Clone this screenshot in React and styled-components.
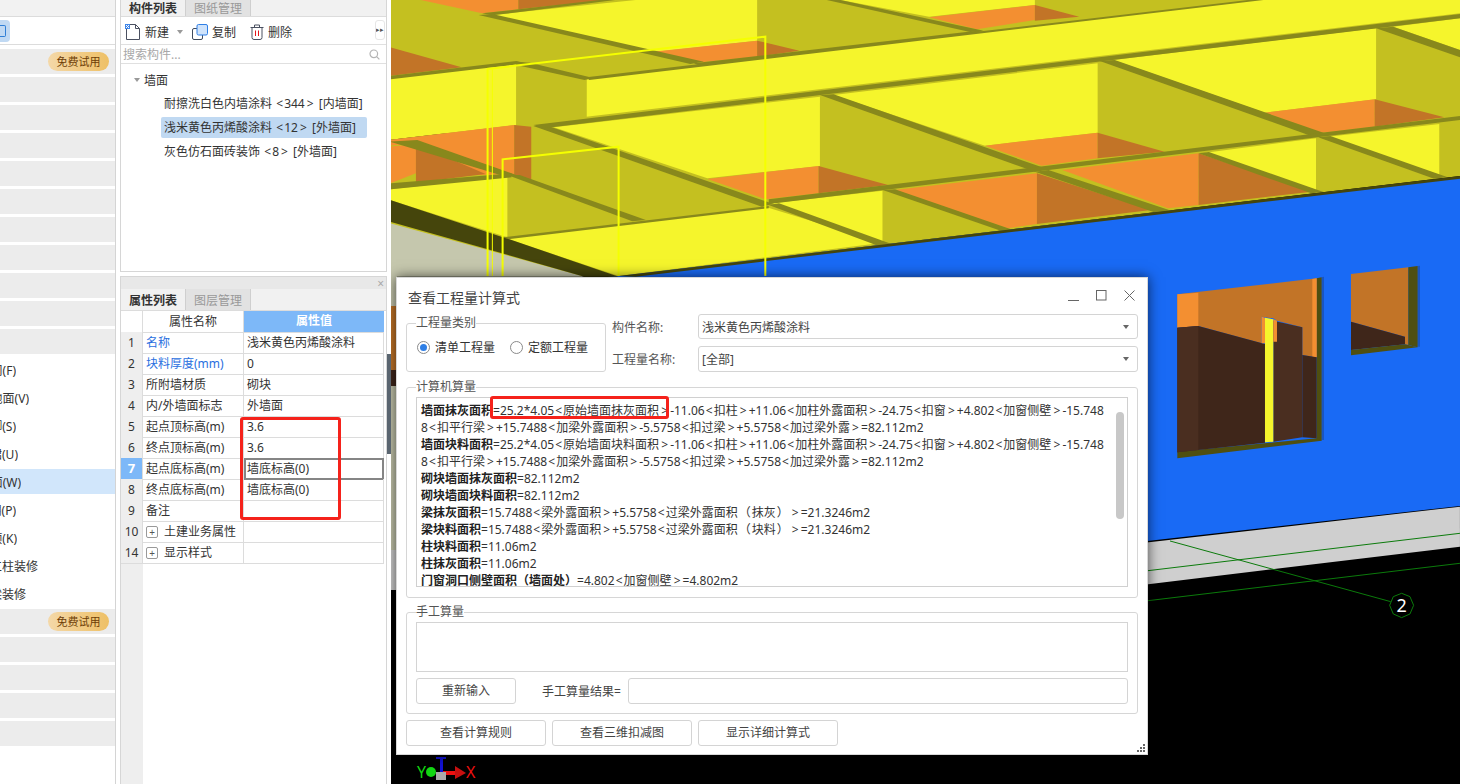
import React from 'react'
import styled, { createGlobalStyle } from 'styled-components'

const FONT = '"Noto Sans", "Noto Sans CJK SC", sans-serif'

const GlobalStyle = createGlobalStyle`
  html, body { margin: 0; padding: 0; height: 100%; overflow: hidden; background: #fff; }
  body { font-family: ${FONT}; font-size: 12px; color: #333; }
  * { box-sizing: border-box; }
`

const Page = styled.div`
  display: flex;
  width: 1460px;
  height: 784px;
  overflow: hidden;
`

/* ---------- left sidebar ---------- */
const Sidebar = styled.div`
  width: 116px;
  flex: none;
  border-right: 1px solid #d4d4d4;
  display: flex;
  flex-direction: column;
`
const SideHead = styled.div`
  height: 17px;
  background: #f2f2f2;
  border-bottom: 1px solid #dcdcdc;
`
const SideSearch = styled.div`
  height: 28px;
  padding-top: 3px;
  border-bottom: 1px solid #dcdcdc;
`
const SideChip = styled.div`
  width: 10px;
  height: 22px;
  background: #c0d9f3;
  border-radius: 0 4px 4px 0;
  display: flex;
  align-items: center;
`
const SideChipIcon = styled.div`
  width: 6px;
  height: 12px;
  border: 1px solid #2f7fd6;
  border-left: none;
  border-radius: 0 2px 2px 0;
`
const SideList = styled.div`
  display: flex;
  flex-direction: column;
  gap: 3px;
  padding-top: 4px;
`
const LockedRow = styled.div`
  height: 25px;
  background: #ececec;
  display: flex;
  align-items: center;
  justify-content: flex-end;
  padding-right: 6px;
`
const Badge = styled.span`
  width: 61px;
  height: 19px;
  border-radius: 10px;
  background: linear-gradient(90deg, #f4d8a8, #eec066);
  color: #6d3d06;
  font-size: 11px;
  line-height: 19px;
  text-align: center;
`
const NavRow = styled.div`
  height: 25px;
  background: ${p => (p.$active ? '#d1e6fb' : 'transparent')};
  display: flex;
  align-items: center;
`
const NavLabel = styled.div`
  width: ${p => p.$end}px;
  overflow: hidden;
  display: flex;
  justify-content: flex-end;
  white-space: nowrap;
  flex: none;
`

/* ---------- middle panels ---------- */
const Middle = styled.div`
  width: 271px;
  flex: none;
  margin-left: 4px;
  padding-right: 4px;
  display: flex;
  flex-direction: column;
  position: relative;
`
const Handle = styled.div`
  position: absolute;
  right: 0;
  top: 354px;
  width: 4px;
  height: 100px;
  background: #5a6570;
`
const Panel = styled.div`
  border: 1px solid #d6d6d6;
  border-top: ${p => (p.$open ? 'none' : '1px solid #d6d6d6')};
  display: flex;
  flex-direction: column;
`
const ListPanel = styled(Panel)`
  height: 272px;
`
const PropPanel = styled(Panel)`
  margin-top: 4px;
  flex: 1;
  border-bottom: none;
`
const TabBar = styled.div`
  height: ${p => p.$h}px;
  flex: none;
  display: flex;
  align-items: stretch;
  background: #f1f1f1;
  border-bottom: 1px solid #dcdcdc;
`
const Tab = styled.div`
  width: 65px;
  display: flex;
  align-items: center;
  justify-content: center;
  font-size: 12px;
  font-weight: ${p => (p.$active ? 700 : 400)};
  color: ${p => (p.$active ? '#333' : '#999')};
  background: ${p => (p.$active ? '#f1f1f1' : '#e2e2e2')};
  border-right: 1px solid #cfcfcf;
`
const Toolbar = styled.div`
  height: 28px;
  flex: none;
  display: flex;
  align-items: center;
  padding: 2px 0 0 4px;
  border-bottom: 1px solid #e0e0e0;
  position: relative;
`
const ToolButton = styled.div`
  display: flex;
  align-items: center;
  gap: 4px;
  margin-left: ${p => p.$left || 0}px;
  margin-right: ${p => p.$gap}px;
`
const Caret = styled.span`
  width: 0;
  height: 0;
  border-left: 3px solid transparent;
  border-right: 3px solid transparent;
  border-top: 4px solid ${p => p.$c || '#999'};
`
const ToolMore = styled.div`
  position: absolute;
  right: 1px;
  top: 3px;
  width: 10px;
  height: 20px;
  background: #fff;
  border: 1px solid #e6e6e6;
  border-radius: 3px;
  font-size: 7px;
  line-height: 18px;
  text-align: center;
  color: #555;
  overflow: hidden;
`
const SearchBox = styled.div`
  height: 19px;
  flex: none;
  display: flex;
  align-items: center;
  justify-content: space-between;
  padding: 0 6px 0 2px;
  color: #a8a8a8;
  border-bottom: 1px solid #e0e0e0;
`
const Tree = styled.div`
  padding-top: 3px;
  display: flex;
  flex-direction: column;
`
const TreeRoot = styled.div`
  height: 26px;
  display: flex;
  align-items: center;
  gap: 4px;
  padding-left: 13px;
`
const TreeItem = styled.div`
  height: 21px;
  margin: 0 0 3px 40px;
  width: 206px;
  padding-left: 3px;
  line-height: 21px;
  border-radius: 2px;
  white-space: nowrap;
  background: ${p => (p.$active ? '#c0d9f2' : 'transparent')};
`
const Angle = styled.span`
  display: inline-block;
  width: ${p => p.$w}px;
  text-align: center;
`
const PanelStrip = styled.div`
  height: 12px;
  flex: none;
  background: #e8e8e8;
  display: flex;
  align-items: center;
  justify-content: flex-end;
  padding-right: 2px;
  color: #aaa;
  font-size: 12px;
`
const PropBody = styled.div`
  flex: 1;
  position: relative;
  background: linear-gradient(90deg, #eee 22px, #fff 22px);
`
const PropRow = styled.div`
  display: grid;
  grid-template-columns: 22px 101px 140px;
  height: 21px;
  background: #fff;
  width: 263px;
`
const IndexCell = styled.div`
  background: ${p => (p.$active ? '#7db8f8' : p.$blank ? '#fff' : '#eee')};
  color: ${p => (p.$active ? '#fff' : '#333')};
  font-weight: ${p => (p.$active ? 700 : 400)};
  font-size: ${p => (p.$active ? 13 : 12)}px;
  text-align: center;
  line-height: 21px;
  border-right: 1px solid #dcdcdc;
  border-bottom: 1px solid #dcdcdc;
`
const NameCell = styled.div`
  padding-left: 3px;
  line-height: 21px;
  white-space: nowrap;
  color: ${p => (p.$blue ? '#2a6fe0' : '#333')};
  border-right: 1px solid #dcdcdc;
  border-bottom: 1px solid #dcdcdc;
  display: flex;
  align-items: center;
  gap: 6px;
`
const ValueCell = styled.div`
  padding-left: 3px;
  line-height: 21px;
  white-space: nowrap;
  border-right: 1px solid #dcdcdc;
  border-bottom: 1px solid #dcdcdc;
  outline: ${p => (p.$selected ? '2px solid #858585' : 'none')};
  outline-offset: -2px;
`
const HeadName = styled(NameCell)`
  justify-content: center;
  padding-left: 0;
  font-size: 12px;
`
const HeadValue = styled.div`
  background: #7db8f8;
  color: #fff;
  font-weight: 700;
  text-align: center;
  line-height: 20px;
  border-bottom: 1px solid #dcdcdc;
`
const Plus = styled.span`
  width: 12px;
  height: 12px;
  border: 1px solid #999;
  border-radius: 2px;
  font-size: 10px;
  line-height: 10px;
  text-align: center;
  color: #555;
  flex: none;
`
const RedBox = styled.div`
  position: absolute;
  left: ${p => p.$x}px;
  top: ${p => p.$y}px;
  width: ${p => p.$w}px;
  height: ${p => p.$h}px;
  border: 3px solid #f5221b;
  border-radius: 3px;
  pointer-events: none;
`

/* ---------- 3D viewport ---------- */
const Viewport = styled.div`
  flex: 1;
  position: relative;
  background: #000;
  overflow: hidden;
`
const Scene = styled.svg`
  display: block;
  width: 1069px;
  height: 784px;
`

/* ---------- dialog ---------- */
const Dialog = styled.div`
  position: absolute;
  left: 5px;
  top: 277px;
  width: 752px;
  height: 478px;
  background: #fff;
  border: 1px solid #d8d8d8;
  box-shadow: 0 0 12px rgba(0, 0, 0, 0.65);
  padding: 0 9px;
  display: flex;
  flex-direction: column;
`
const TitleBar = styled.div`
  height: 36px;
  flex: none;
  display: flex;
  align-items: center;
  justify-content: space-between;
  padding: 2px 3px 0 2px;
`
const Title = styled.div`
  font-size: 14px;
  color: #444;
`
const WinButtons = styled.div`
  display: flex;
  align-items: center;
  gap: 17px;
  margin-top: -3px;
`
const TopRow = styled.div`
  display: flex;
  height: 58px;
  flex: none;
`
const Group = styled.fieldset`
  margin: ${p => p.$top || 0}px 0 0 0;
  padding: 0 ${p => p.$px ?? 9}px;
  width: ${p => p.$w || '732px'};
  height: ${p => p.$h}px;
  border: 1px solid #d6d6d6;
  border-radius: 3px;
  flex: none;
  min-width: 0;
  position: relative;
`
const Legend = styled.legend`
  margin-left: 0;
  padding: 0;
  height: 16px;
  line-height: 16px;
  font-size: 12px;
  color: #555;
`
const RadioRow = styled.div`
  display: flex;
  align-items: center;
  height: 32px;
  padding-left: 1px;
`
const RadioDot = styled.span`
  width: 13px;
  height: 13px;
  border-radius: 50%;
  border: 1px solid #8a8a8a;
  flex: none;
  margin-right: 5px;
  display: flex;
  align-items: center;
  justify-content: center;
  &::after {
    content: '';
    width: 7px;
    height: 7px;
    border-radius: 50%;
    background: ${p => (p.$on ? '#2f7fe6' : 'transparent')};
  }
`
const RadioText = styled.span`
  margin-right: 15px;
  white-space: nowrap;
  color: #333;
`
const Fields = styled.div`
  margin-left: 6px;
  width: 526px;
  display: flex;
  flex-direction: column;
  gap: 7px;
`
const FieldRow = styled.div`
  display: flex;
  align-items: center;
  height: ${p => p.$h}px;
`
const FieldLabel = styled.div`
  width: 86px;
  color: #555;
  flex: none;
`
const Select = styled.div`
  flex: 1;
  height: 100%;
  border: 1px solid #d4d4d4;
  border-radius: 3px;
  display: flex;
  align-items: center;
  justify-content: space-between;
  padding: 0 8px 0 3px;
  color: #444;
`
const CalcBox = styled.div`
  height: 190px;
  margin-top: 2px;
  border: 1px solid #d0d0d0;
  position: relative;
  overflow: hidden;
  padding: 4px 0 0 4px;
`
const CalcLine = styled.div`
  height: 17px;
  line-height: 17px;
  white-space: nowrap;
  font-size: 12px;
  color: #333;
  b { font-weight: 700; color: #222; }
`
const ScrollThumb = styled.div`
  position: absolute;
  right: 3px;
  top: 14px;
  width: 8px;
  height: 107px;
  background: #c8c8c8;
  border-radius: 4px;
`
const ManualArea = styled.div`
  height: 50px;
  margin-top: 2px;
  border: 1px solid #d4d4d4;
`
const ManualRow = styled.div`
  display: flex;
  align-items: center;
  margin-top: 6px;
`
const Button = styled.div`
  width: ${p => p.$w}px;
  height: 26px;
  flex: none;
  border: 1px solid #d4d4d4;
  border-radius: 3px;
  background: #fff;
  color: #444;
  line-height: 24px;
  text-align: center;
`
const ManualLabel = styled.div`
  margin-left: 26px;
  width: 86px;
  flex: none;
  color: #444;
  white-space: nowrap;
`
const ManualInput = styled.div`
  flex: 1;
  height: 26px;
  border: 1px solid #d4d4d4;
  border-radius: 3px;
`
const ButtonRow = styled.div`
  display: flex;
  gap: 6px;
  margin-top: 6px;
`
const Grip = styled.svg`
  position: absolute;
  right: 2px;
  bottom: 2px;
  width: 9px;
  height: 9px;
`

/* scene data: [fill, points] with points as read off the picture */
const Y = '#f5f52c'
const O = '#c4c020'
const A = '#f38f31'
const D = '#c27427'
const B = '#88881c'

const beams = [
  '130,45 150,42 460,185 440,192', '210,378 232,378 562,612 545,620', '630,285 650,283 960,505 945,515',
  '1040,183 1062,180 1370,400 1350,408', '1445,85 1470,80 1568,150 1568,172', '945,515 965,510 1145,632 1120,637',
  '722,570 740,568 910,688 895,692', '555,615 570,610 735,732 715,737', '1185,460 1200,456 1368,576 1350,580',
  '1360,412 1378,408 1550,532 1530,536', '0,425 40,420 185,525 170,530', '172,525 190,525 375,660 355,664',
  '135,40 320,-3 330,0 150,46', '445,190 860,92 870,95 455,198', '0,228 185,183 200,190 0,238',
  '185,185 205,188 298,234 285,240 185,195',
  '288,232 1270,-3 1280,0 292,240', '210,375 1568,42 1568,55 225,385',
  '0,550 178,520 178,532 0,568', '555,598 1568,348 1568,360 555,612', '165,712 555,618 555,625 172,718',
]

const faces = [
  [O, '0,0 1568,0 1568,400 0,400'],
  [D, '0,142 105,202 0,228'],
  [A, '45,0 188,0 188,28 135,40'],
  [D, '188,0 320,0 188,28'],
  [Y, '150,45 360,0 538,0 538,122 390,155'],
  [A, '385,155 538,122 538,170 455,187'],
  [D, '538,122 600,152 538,170'],
  [Y, '660,0 945,0 945,15 790,50'],
  [A, '790,52 945,15 945,60 860,88'],
  [D, '945,15 1010,50 945,62'],
  [B, '640,0 660,0 870,92 850,96'],
  [Y, '288,238 1270,0 1568,0 1568,45 288,358'],
  [Y, '0,235 185,190 185,375 0,420'],
  [O, '185,190 288,238 288,358 185,375'],
  [O, '0,420 1568,40 1568,528 335,828 0,828'],
  [A, '0,420 182,375 182,522 130,525 35,430 0,437'],
  [D, '182,375 207,380 207,540 182,530'],
  [Y, '240,382 630,290 630,498 465,535'],
  [Y, '650,285 1037,190 1037,398 872,437'],
  [Y, '1060,180 1445,85 1445,298 1282,338'],
  [Y, '1470,80 1568,55 1568,150'],
  [A, '465,537 628,498 628,580 550,598'],
  [D, '628,498 730,555 628,580'],
  [A, '872,437 1037,398 1037,475 955,497'],
  [D, '1037,398 1135,455 1037,475'],
  [A, '1282,338 1443,298 1443,380 1365,398'],
  [D, '1443,298 1545,352 1443,380'],
  [A, '0,440 38,432 38,520 0,550'],
  [D, '38,432 140,522 38,548'],
  [O, '0,620 0,560 172,528 370,660 172,712'],
  [Y, '0,568 172,528 172,712 0,600'],
  [Y, '170,715 552,622 722,728 335,828'],
  [Y, '560,610 722,572 722,728'],
  [O, '722,572 895,690 722,728'],
  [A, '740,570 948,520 948,672 905,685'],
  [D, '948,520 1115,630 948,672'],
  [A, '985,510 1185,460 1185,615 1140,625'],
  [D, '1185,460 1350,575 1185,615'],
  [Y, '1195,458 1357,415 1357,570'],
  [O, '1357,415 1540,530 1357,572'],
  [Y, '1375,410 1538,372 1538,525'],
  [O, '1538,372 1568,395 1568,522 1538,530'],
]

const windowParts = [
  ['#1a55c0', '545,82 552,80 552,570 545,570'],
  ['#4f4f10', '530,85 545,82 545,572 530,572'],
  ['#4f4f10', '112,605 530,565 545,572 112,625'],
  [D, '112,133 530,85 530,322 487,315 487,232 411,212 400,205 365,200 365,280 175,228 112,232'],
  [A, '112,133 175,128 175,228 112,233'],
  [A, '517,87 530,85 530,322 517,320'],
  ['#3f261a', '112,233 175,228 375,282 375,578 112,607'],
  ['#4a2e20', '112,233 175,228 175,600 112,607'],
  ['#4a2e20', '400,212 487,232 487,562 400,575'],
  ['#3f261a', '487,315 530,322 530,565 487,562'],
  [Y, '375,203 400,208 400,575 375,577'],
  [A, '365,200 375,203 375,280 365,280'],
  [A, '400,208 411,212 411,275 400,275'],
  ['#1a55c0', '833,48 840,47 840,290 833,290'],
  [D, '633,72 805,52 805,285 795,283 795,260 633,215'],
  ['#3f261a', '633,215 795,260 795,283 633,300'],
  ['#4f4f10', '805,52 833,48 833,292 805,285'],
  ['#4f4f10', '633,300 795,283 833,292 633,316'],
]

const CanvasScene = () => (
  <Scene viewBox="391 0 1069 784">
    <rect x="391" y="0" width="1069" height="784" fill="#000" />
    <g transform="translate(390 0) scale(0.6824 0.3333)">
      <polygon fill="#196af5" points="320,830 1568,530 1568,1518 320,1805" />
      {faces.map(([fill, pts], i) => <polygon key={i} fill={fill} points={pts} />)}
      {beams.map((pts, i) => <polygon key={i} fill={B} points={pts} />)}
      <polygon fill="#c5c7ad" points="0,670 285,830 0,830" />
      <polygon fill="#45450c" points="0,600 172,716 335,830 285,830 0,665" />
      <polygon fill="#45450c" points="335,828 1568,528 1568,536 360,830" />
      <polyline fill="none" stroke="#f5ff00" strokeWidth="2" vectorEffect="non-scaling-stroke" points="143,828 143,207 550,110 550,828" />
      <polyline fill="none" stroke="#f5ff00" strokeWidth="2" vectorEffect="non-scaling-stroke" points="165,828 165,478 335,440 335,828" />
      <line x1="150" y1="828" x2="150" y2="207" stroke="#f5ff00" strokeWidth="1" vectorEffect="non-scaling-stroke" />
    </g>
    {/* sliver of the model left of the dialog */}
    <rect x="391" y="276" width="6" height="30" fill="#c5c7ad" />
    <rect x="391" y="306" width="6" height="64" fill={D} />
    <rect x="391" y="370" width="6" height="16" fill="#3f261a" />
    <rect x="391" y="386" width="6" height="164" fill="#c5c7ad" />
    <rect x="391" y="550" width="6" height="40" fill="#cfcfcf" />
    <g transform="translate(1140 250) scale(0.3333)">
      {windowParts.map(([fill, pts], i) => <polygon key={i} fill={fill} points={pts} />)}
      <polygon fill="#cfcfcf" points="0,880 960,770 960,890 0,1006" />
      <g fill="none" stroke="#0b7a0b" strokeWidth="3">
        <line x1="0" y1="965" x2="960" y2="850" />
        <line x1="0" y1="1055" x2="960" y2="940" />
        <line x1="90" y1="873" x2="752" y2="1055" />
        <polygon points="785,1030 810,1040 821,1066 810,1092 785,1103 760,1092 749,1066 760,1040" fill="#000" />
      </g>
      <text x="785" y="1086" fontSize="54" fill="#fff" textAnchor="middle" fontFamily="Noto Sans, sans-serif">2</text>
    </g>
    {/* axis gizmo */}
    <text x="417" y="778" fontSize="16" fill="#12d812" fontFamily="Noto Sans, sans-serif">Y</text>
    <circle cx="431" cy="772" r="5" fill="#12d812" />
    <rect x="440" y="757" width="3" height="17" fill="#1212d8" />
    <rect x="436" y="757" width="10" height="2" fill="#1212d8" />
    <rect x="443" y="771" width="14" height="4" fill="#ee1111" />
    <polygon points="455,766 466,773 455,779" fill="#c81010" />
    <rect x="436" y="772" width="10" height="8" fill="#aaa" />
    <text x="466" y="778" fontSize="16" fill="#ee1111" fontFamily="Noto Sans, sans-serif">X</text>
  </Scene>
)

/* ---------- little icons ---------- */
const NewIcon = () => (
  <svg width="16" height="16" viewBox="0 0 16 16">
    <path d="M1.5 5V15.5H14.5V4.5L10.5 .5H5" fill="#fff" stroke="#4a5060" />
    <path d="M10.5 .5V4.5H14.5" fill="none" stroke="#4a5060" />
    <rect x="0" y="0" width="5" height="5" fill="#3f86e8" />
    <path d="M1 1h1v1H1zM3 1h1v1H3zM2 2h1v1H2zM1 3h1v1H1zM3 3h1v1H3z" fill="#fff" />
  </svg>
)
const CopyIcon = () => (
  <svg width="16" height="16" viewBox="0 0 16 16">
    <rect x=".5" y="4.5" width="10" height="11" rx="1.5" fill="#fff" stroke="#3f4a5c" />
    <rect x="5" y=".5" width="10.5" height="10.5" rx="1.5" fill="#cfe3fb" stroke="#2f7fe6" />
  </svg>
)
const TrashIcon = () => (
  <svg width="14" height="16" viewBox="0 0 14 16">
    <path d="M.5 3.5H13.5M4.5 3.5V1H9.5V3.5" fill="none" stroke="#4a5060" />
    <path d="M2 3.5V13.5Q2 15.5 4 15.5H10Q12 15.5 12 13.5V3.5" fill="none" stroke="#4a5060" />
    <path d="M5.5 6.5V12M8.5 6.5V12" stroke="#e4141c" />
  </svg>
)
const SearchIcon = () => (
  <svg width="11" height="11" viewBox="0 0 11 11">
    <circle cx="4.8" cy="4.8" r="3.8" fill="none" stroke="#b4b4b4" strokeWidth="1.2" />
    <path d="M7.6 7.6L10.4 10.4" stroke="#b4b4b4" strokeWidth="1.2" />
  </svg>
)
const MinIcon = () => (
  <svg width="11" height="11" viewBox="0 0 11 11"><path d="M0 10.5H11" stroke="#666" /></svg>
)
const MaxIcon = () => (
  <svg width="11" height="11" viewBox="0 0 11 11"><rect x=".5" y=".5" width="9.5" height="9.5" fill="none" stroke="#666" /></svg>
)
const CloseIcon = () => (
  <svg width="11" height="11" viewBox="0 0 11 11"><path d="M.5 .5L10.5 10.5M10.5 .5L.5 10.5" stroke="#666" /></svg>
)

// the app draws < and > and the full-width brackets wider than the font does
const spaced = text =>
  text.split(/([<>（）])/).map((part, i) =>
    part === '<' ? <Angle key={i} $w={9}>&lt;</Angle>
    : part === '>' ? <Angle key={i} $w={11}>&gt;</Angle>
    : part === '（' || part === '）' ? <Angle key={i} $w={14}>{part}</Angle>
    : part
  )

/* ---------- data ---------- */
const navItems = [
  ['房间(F)', 16], ['楼地面(V)', 29], ['踢脚(S)', 16], ['墙裙(U)', 18], ['墙面(W)', 21, true],
  ['天棚(P)', 16], ['吊顶(K)', 17], ['独立柱装修', 38], ['单梁装修', 26],
]
const propRows = [
  ['1', '名称', '浅米黄色丙烯酸涂料', true],
  ['2', '块料厚度(mm)', '0', true],
  ['3', '所附墙材质', '砌块'],
  ['4', '内/外墙面标志', '外墙面'],
  ['5', '起点顶标高(m)', '3.6'],
  ['6', '终点顶标高(m)', '3.6'],
  ['7', '起点底标高(m)', '墙底标高(0)', false, true],
  ['8', '终点底标高(m)', '墙底标高(0)'],
  ['9', '备注', ''],
]
const wallPlaster = '<扣柱>+11.06<加柱外露面积>-24.75<扣窗>+4.802<加窗侧壁>-15.748'
const wallTail = '8<扣平行梁>+15.7488<加梁外露面积>-5.5758<扣过梁>+5.5758<加过梁外露>=82.112m2'
const calcLines = [
  ['墙面抹灰面积', `=25.2*4.05<原始墙面抹灰面积>-11.06${wallPlaster}`],
  ['', wallTail],
  ['墙面块料面积', `=25.2*4.05<原始墙面块料面积>-11.06${wallPlaster}`],
  ['', wallTail],
  ['砌块墙面抹灰面积', '=82.112m2'],
  ['砌块墙面块料面积', '=82.112m2'],
  ['梁抹灰面积', '=15.7488<梁外露面积>+5.5758<过梁外露面积（抹灰）>=21.3246m2'],
  ['梁块料面积', '=15.7488<梁外露面积>+5.5758<过梁外露面积（块料）>=21.3246m2'],
  ['柱块料面积', '=11.06m2'],
  ['柱抹灰面积', '=11.06m2'],
  ['门窗洞口侧壁面积（墙面处）', '=4.802<加窗侧壁>=4.802m2'],
]

const App = () => (
  <Page>
    <GlobalStyle />
    <Sidebar>
      <SideHead />
      <SideSearch><SideChip><SideChipIcon /></SideChip></SideSearch>
      <SideList>
        <LockedRow><Badge>免费试用</Badge></LockedRow>
        {Array.from({ length: 10 }, (_, i) => <LockedRow key={i} />)}
        {navItems.map(([text, end, active]) => (
          <NavRow key={text} $active={active}><NavLabel $end={end}>{text}</NavLabel></NavRow>
        ))}
        <LockedRow><Badge>免费试用</Badge></LockedRow>
        {Array.from({ length: 4 }, (_, i) => <LockedRow key={i} />)}
      </SideList>
    </Sidebar>

    <Middle>
      <ListPanel $open>
        <TabBar $h={17}>
          <Tab $active>构件列表</Tab>
          <Tab>图纸管理</Tab>
        </TabBar>
        <Toolbar>
          <ToolButton $gap={8}><NewIcon /><span>新建</span></ToolButton>
          <Caret />
          <ToolButton $left={9} $gap={14}><CopyIcon /><span>复制</span></ToolButton>
          <ToolButton $gap={0}><TrashIcon /><span>删除</span></ToolButton>
          <ToolMore>▸▸</ToolMore>
        </Toolbar>
        <SearchBox><span>搜索构件...</span><SearchIcon /></SearchBox>
        <Tree>
          <TreeRoot><Caret /><span>墙面</span></TreeRoot>
          <TreeItem>{spaced('耐擦洗白色内墙涂料 <344> [内墙面]')}</TreeItem>
          <TreeItem $active>{spaced('浅米黄色丙烯酸涂料 <12> [外墙面]')}</TreeItem>
          <TreeItem>{spaced('灰色仿石面砖装饰 <8> [外墙面]')}</TreeItem>
        </Tree>
      </ListPanel>

      <PropPanel>
        <PanelStrip>×</PanelStrip>
        <TabBar $h={22}>
          <Tab $active>属性列表</Tab>
          <Tab>图层管理</Tab>
        </TabBar>
        <PropBody>
          <PropRow>
            <IndexCell $blank />
            <HeadName>属性名称</HeadName>
            <HeadValue>属性值</HeadValue>
          </PropRow>
          {propRows.map(([n, name, value, blue, selected]) => (
            <PropRow key={n}>
              <IndexCell $active={selected}>{n}</IndexCell>
              <NameCell $blue={blue}>{name}</NameCell>
              <ValueCell $selected={selected}>{value}</ValueCell>
            </PropRow>
          ))}
          <PropRow>
            <IndexCell>10</IndexCell>
            <NameCell><Plus>+</Plus>土建业务属性</NameCell>
            <ValueCell />
          </PropRow>
          <PropRow>
            <IndexCell>14</IndexCell>
            <NameCell><Plus>+</Plus>显示样式</NameCell>
            <ValueCell />
          </PropRow>
          <RedBox $x={119} $y={106} $w={101} $h={103} />
        </PropBody>
      </PropPanel>
      <Handle />
    </Middle>

    <Viewport>
      <CanvasScene />
      <Dialog>
        <TitleBar>
          <Title>查看工程量计算式</Title>
          <WinButtons><MinIcon /><MaxIcon /><CloseIcon /></WinButtons>
        </TitleBar>
        <TopRow>
          <Group $top={1} $h={57} $w="200px">
            <Legend>工程量类别</Legend>
            <RadioRow>
              <RadioDot $on /><RadioText>清单工程量</RadioText>
              <RadioDot /><RadioText>定额工程量</RadioText>
            </RadioRow>
          </Group>
          <Fields>
            <FieldRow $h={25}>
              <FieldLabel>构件名称:</FieldLabel>
              <Select>浅米黄色丙烯酸涂料<Caret $c="#666" /></Select>
            </FieldRow>
            <FieldRow $h={26}>
              <FieldLabel>工程量名称:</FieldLabel>
              <Select>[全部]<Caret $c="#666" /></Select>
            </FieldRow>
          </Fields>
        </TopRow>
        <Group $top={7} $h={219}>
          <Legend>计算机算量</Legend>
          <CalcBox>
            {calcLines.map(([head, rest], i) => (
              <CalcLine key={i}><b>{head}</b>{spaced(rest)}</CalcLine>
            ))}
            <ScrollThumb />
          </CalcBox>
          <RedBox $x={83} $y={1} $w={179} $h={23} />
        </Group>
        <Group $top={6} $h={110}>
          <Legend>手工算量</Legend>
          <ManualArea />
          <ManualRow>
            <Button $w={100}>重新输入</Button>
            <ManualLabel>手工算量结果=</ManualLabel>
            <ManualInput />
          </ManualRow>
        </Group>
        <ButtonRow>
          <Button $w={140}>查看计算规则</Button>
          <Button $w={140}>查看三维扣减图</Button>
          <Button $w={140}>显示详细计算式</Button>
        </ButtonRow>
        <Grip viewBox="0 0 9 9">
          <path d="M7 1h2v2H7zM4 4h2v2H4zM7 4h2v2H7zM1 7h2v2H1zM4 7h2v2H4zM7 7h2v2H7z" fill="#666" />
        </Grip>
      </Dialog>
    </Viewport>
  </Page>
)

export default App
